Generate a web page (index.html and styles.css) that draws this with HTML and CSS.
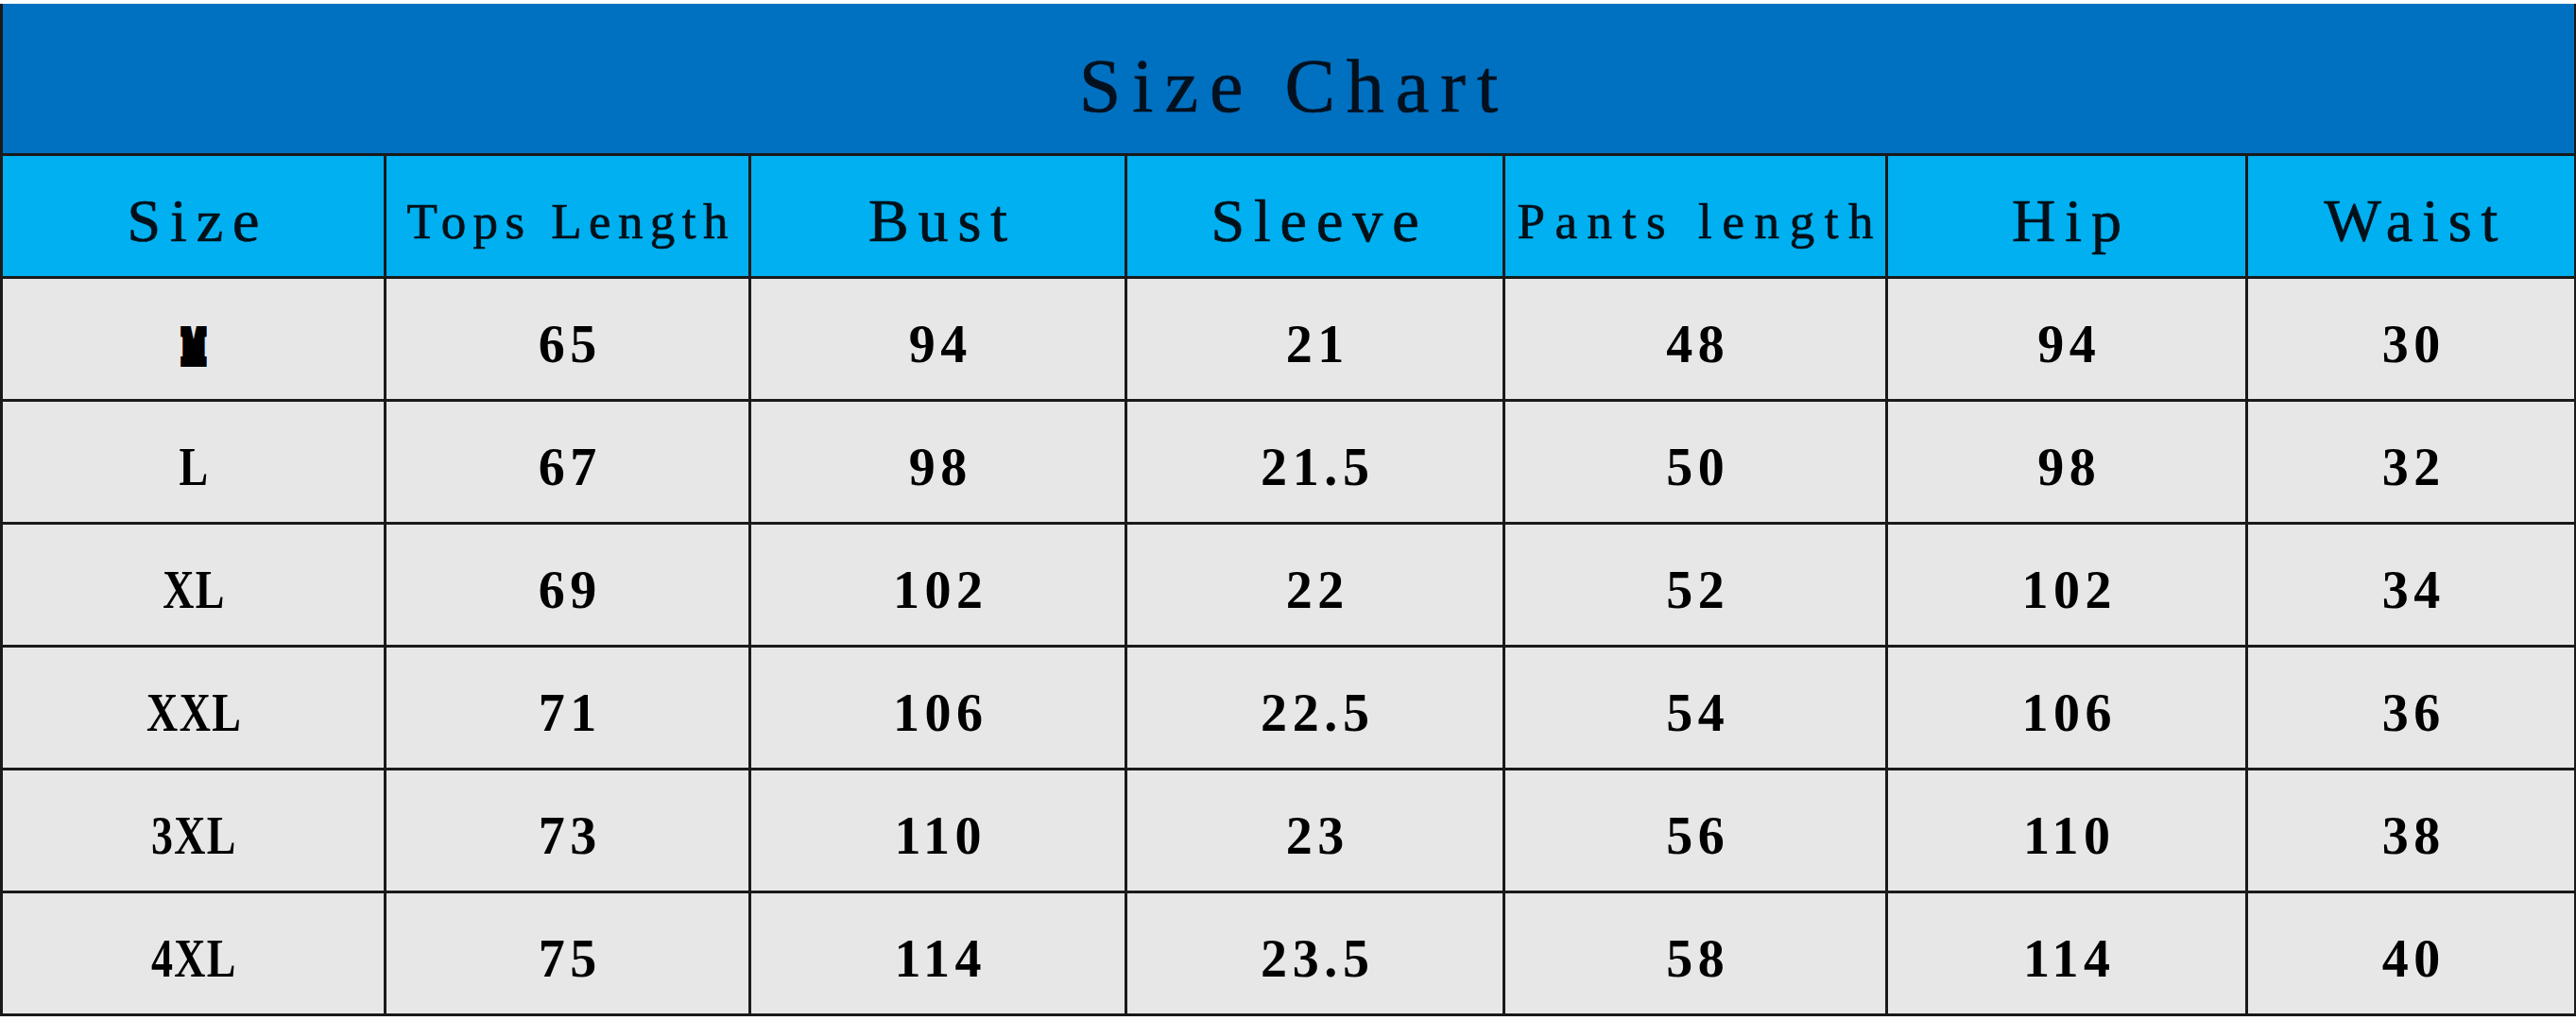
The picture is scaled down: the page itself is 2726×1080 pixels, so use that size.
FILE: index.html
```html
<!DOCTYPE html>
<html lang="en">
<head>
<meta charset="utf-8">
<title>Size Chart</title>
<link rel="stylesheet" href="styles.css">
</head>
<body>
<table class="chart">
  <colgroup>
    <col class="c1"><col class="c2"><col class="c3"><col class="c4"><col class="c5"><col class="c6"><col class="c7">
  </colgroup>
  <thead>
    <tr class="title-row"><th colspan="7" class="title"><span class="t">Size Chart</span></th></tr>
    <tr class="head-row">
      <th><span class="t">Size</span></th>
      <th class="small tl"><span class="t">Tops Length</span></th>
      <th><span class="t">Bust</span></th>
      <th><span class="t">Sleeve</span></th>
      <th class="small pl"><span class="t">Pants length</span></th>
      <th><span class="t">Hip</span></th>
      <th><span class="t">Waist</span></th>
    </tr>
  </thead>
  <tbody>
    <tr><td class="sz"><span class="t m">M</span></td><td><span class="t">65</span></td><td><span class="t">94</span></td><td><span class="t">21</span></td><td><span class="t">48</span></td><td><span class="t">94</span></td><td><span class="t">30</span></td></tr>
    <tr><td class="sz"><span class="t">L</span></td><td><span class="t">67</span></td><td><span class="t">98</span></td><td><span class="t">21.5</span></td><td><span class="t">50</span></td><td><span class="t">98</span></td><td><span class="t">32</span></td></tr>
    <tr><td class="sz"><span class="t">XL</span></td><td><span class="t">69</span></td><td><span class="t">102</span></td><td><span class="t">22</span></td><td><span class="t">52</span></td><td><span class="t">102</span></td><td><span class="t">34</span></td></tr>
    <tr><td class="sz"><span class="t">XXL</span></td><td><span class="t">71</span></td><td><span class="t">106</span></td><td><span class="t">22.5</span></td><td><span class="t">54</span></td><td><span class="t">106</span></td><td><span class="t">36</span></td></tr>
    <tr><td class="sz"><span class="t">3XL</span></td><td><span class="t">73</span></td><td><span class="t">110</span></td><td><span class="t">23</span></td><td><span class="t">56</span></td><td><span class="t">110</span></td><td><span class="t">38</span></td></tr>
    <tr><td class="sz"><span class="t">4XL</span></td><td><span class="t">75</span></td><td><span class="t">114</span></td><td><span class="t">23.5</span></td><td><span class="t">58</span></td><td><span class="t">114</span></td><td><span class="t">40</span></td></tr>
  </tbody>
</table>
</body>
</html>
```
FILE: styles.css
```css
html, body {
  margin: 0;
  padding: 0;
  background: #ffffff;
}
body {
  padding-top: 4px;
  font-family: "Liberation Serif", "Times New Roman", serif;
  color: #000;
}
.chart {
  width: 2724px;
  table-layout: fixed;
  border-collapse: collapse;
}
.c1 { width: 406px; }
.c2 { width: 386px; }
.c3 { width: 398px; }
.c4 { width: 400px; }
.c5 { width: 405px; }
.c6 { width: 381px; }
.c7 { width: 348px; }

.chart th, .chart td {
  border: 3px solid #1a1a1a;
  padding: 12px 0 0 0;
  text-align: center;
  vertical-align: middle;
  overflow: hidden;
  white-space: nowrap;
  line-height: 1.15;
}
.t {
  display: inline-block;
  letter-spacing: var(--ls, 0);
  margin-right: calc(-1 * var(--ls, 0));
}

.title-row { height: 159px; }
.title {
  background: #0070c0;
  border-top: none !important;
  padding-top: 17px !important;
  font-size: 80px;
  font-weight: normal;
  color: #03101e;
  --ls: 0.15em;
  -webkit-text-stroke: 0.6px #03101e;
}

.head-row { height: 130px; }
.head-row th {
  background: #00b0f0;
  font-size: 64px;
  font-weight: normal;
  color: #021019;
  --ls: 0.155em;
  -webkit-text-stroke: 0.7px #021019;
}
.head-row th.small { font-size: 53px; }
.head-row th.tl { --ls: 0.14em; }
.head-row th.pl { --ls: 0.2em; }

.chart tbody tr { height: 130px; }
.chart td {
  background: #e7e7e7;
  font-size: 56px;
  font-weight: bold;
  --ls: 0.1em;
}
.chart td.sz .t {
  --ls: 0.03em;
  transform: scaleX(0.82);
}
.chart td.sz .m {
  font-size: 50px;
  transform: scaleX(0.5);
  -webkit-text-stroke: 10px #000;
}
```
